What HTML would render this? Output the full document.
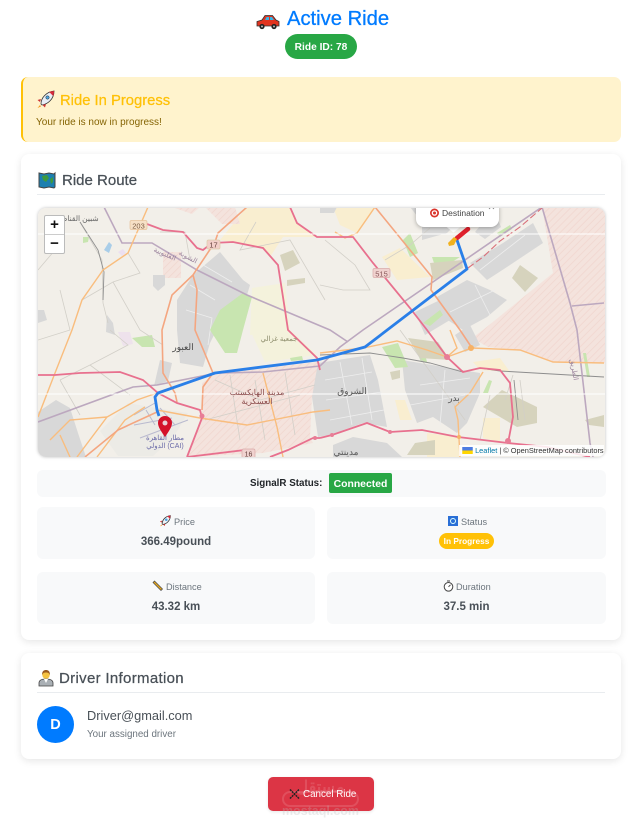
<!DOCTYPE html>
<html><head><meta charset="utf-8"><style>
html,body{margin:0;padding:0;background:#fff;width:642px;height:835px;overflow:hidden}
body{font-family:"Liberation Sans","Noto Sans CJK SC",sans-serif;position:relative}
.a{position:absolute;white-space:nowrap}
.c{text-align:center}
.card{position:absolute;left:21px;width:600px;background:#fff;border-radius:8px;box-shadow:0 2px 8px rgba(0,0,0,.1)}
.box{position:absolute;background:#f8f9fa;border-radius:6px}
.rule{position:absolute;left:37px;width:568px;height:1px;background:#e9ecef}
.h{font-size:15px;color:#495057;-webkit-text-stroke:.25px #495057}
.lbl{font-size:9.200px;color:#6c757d}
.val{font-size:11.500px;font-weight:bold;color:#495057}
svg text{font-family:"Liberation Sans","Noto Sans CJK SC",sans-serif}
</style></head><body>

<svg class="a" style="left:256px;top:14px" width="24" height="16" viewBox="0 0 24 16"><path d="M6 6 9 1.500h7.500L20 6l3 1.500V12H1V7.500z" fill="#e2341f" stroke="#333" stroke-width=".8"/><path d="M9 6l1.500-3h2.500v3zM14 6V3h2l2 3z" fill="#37b6e8"/><circle cx="6" cy="12.500" r="2.600" fill="#222"/><circle cx="18" cy="12.500" r="2.600" fill="#222"/><circle cx="6" cy="12.500" r="1" fill="#bbb"/><circle cx="18" cy="12.500" r="1" fill="#bbb"/></svg>
<div class="a" style="left:287px;top:6px;font-size:20.200px;line-height:26px;color:#007bff;-webkit-text-stroke:.3px #007bff">Active Ride</div>
<div class="a c" style="left:285px;top:34px;width:72px;height:25px;line-height:25px;border-radius:13px;background:#28a745;color:#fff;font-size:10.200px;font-weight:bold"><span style="position:relative;top:1px">Ride ID: 78</span></div>

<div class="a" style="left:21px;top:77px;width:598px;height:65px;background:#fff3cd;border-left:2px solid #ffc107;border-radius:7px"></div>
<svg class="a" style="left:36px;top:90px" width="19" height="19" viewBox="0 0 19 19"><path d="M5 14C5 8 10 2 18 1c0 8-6 13-12 14z" fill="#e8eef5" stroke="#333" stroke-width=".8"/><path d="M13 1.800 18 1c0 2-.3 3.500-.8 5z" fill="#d8283a"/><circle cx="11.500" cy="7.500" r="1.700" fill="#4aa3e0" stroke="#333" stroke-width=".5"/><path d="M5 9 1.500 10 4 12zM10 14l-1 3.500-2.500-2.500z" fill="#c33"/><path d="M4 15l-2.500 3 3.500-1.500z" fill="#f59a23"/></svg>
<div class="a" style="left:60px;top:92px;font-size:14.800px;line-height:18px;color:#ffc107;-webkit-text-stroke:.25px #ffc107">Ride In Progress</div>
<div class="a" style="left:36px;top:116px;font-size:10px;line-height:14px;color:#856404">Your ride is now in progress!</div>

<div class="card" style="top:154px;height:486px"></div>
<svg class="a" style="left:38px;top:171px" width="18" height="18" viewBox="0 0 18 18"><path d="M1 2l5 1 5-1 5 1 1-1v14l-1 1-5-1-5 1-5-1z" fill="#1c7fb0" stroke="#444" stroke-width="1"/><path d="M4 5l5-1 2 3-3 4-3-2zM12 8l3-2v5l-2 2z" fill="#3d9a3f"/></svg>
<div class="a h" style="left:62px;top:172px;line-height:18px">Ride Route</div>
<div class="rule" style="top:194px"></div>

<div class="a" style="left:38px;top:208px;width:567px;height:249px;border-radius:8px;overflow:hidden;box-shadow:0 0 3px rgba(0,0,0,.25)">
<svg width="567" height="249" viewBox="38 208 567 249" style="display:block;filter:blur(.35px)">
<defs>
<pattern id="ht" width="5" height="5" patternUnits="userSpaceOnUse" patternTransform="rotate(45)"><rect width="5" height="5" fill="#f4e3dd"/><rect width="1" height="5" fill="#f1d9d2"/></pattern>
</defs>
<rect x="37" y="207" width="568" height="250" fill="#f2efe9"/>
<g fill="#f9eed0">
<path d="M220 240 247 207H290L297 223 317 237H283L270 257 263 247z"/><path d="M333 207H375L357 233 340 225z"/><path d="M382 257 400 248 430 277 397 280z"/><path d="M427 433 458 437 460 457H427z"/><path d="M483 418H500V442L483 438z"/><path d="M473 362 500 358 510 372 480 370z"/><path d="M395 400 405 400 412 420 400 420z"/>
<path d="M252 288 285 283 290 330 250 335z" fill="#f4f2dc"/><path d="M250 330 290 330 317 355 265 362z" fill="#f4f2dc"/>
</g>
<g>
<path d="M542 207H605V363L553 362 520 350 488 347 472 338 483 330 553 273z" fill="url(#ht)"/>
<path d="M202 383 217 373 317 362 320 380 312 397 310 437 313 443 263 453 187 457 200 420 203 397z" fill="url(#ht)"/>
<path d="M163 252H181V278H163zM172 207H200L192 214zM205 207H222L232 224H222zM220 207H235L240 224 232 224z" fill="url(#ht)"/>
</g>
<path d="M128 403l28 5 32 5-15 25-20 18H118l-18-25z" fill="#ecebe6"/>
<g fill="#d8d8d8">
<path d="M177 300 193 275 220 252 243 280 250 285 247 295 215 333 210 343 203 367 180 363 177 330z"/>
<path d="M318 363 370 355 378 380 387 427 363 423 330 435 318 437 312 397z"/>
<path d="M333 445 353 437 387 443 402 457H333z"/>
<path d="M402 360 480 373 480 393 467 423 457 433 433 417 417 423 405 390z"/>
<path d="M422 240 447 233 467 213 470 207H410L422 222z"/>
<path d="M470 263 503 243 533 223 543 243 507 267 487 280z"/>
<path d="M437 297 467 280 490 290 507 300 487 317 463 330 443 317z"/>
<path d="M415 312 440 300 450 320 425 335zM455 335 470 325 480 345 465 352z"/>
<path d="M320 207h17l-3 6h-14z"/>
<path d="M160 360l12 3-4 18-14 5z"/>
<path d="M38 412l18-12 14 8 8 25 8 24H38z"/>
<path d="M38 310h6l3 10-9 3zM107 315l6 8 2 12-9-3zM153 275h12v10l-7 6-5-5z"/>
<path d="M475 232l10-12 12-3 4 10-16 12z"/>
</g>
<g fill="none" stroke="#eeeeee" stroke-width=".8">
<path d="M190 285 215 300M186 310 212 318 208 345M198 262 232 282M325 380 372 372M326 400 382 392M330 420 384 410M340 362 352 425M362 358 372 420M420 385 470 378M410 405 465 395M445 370 440 425M480 270 525 235M450 312 495 290M475 285 490 315"/>
</g>
<g fill="#c8e5b0">
<path d="M210 330 220 310 243 293 252 297 243 330 237 353 225 353z"/>
<path d="M132 338 152 335 155 347 142 347z"/>
<path d="M403 240l7-7 8 20-8 4z"/><path d="M432 257h28l-8 5-18 1z"/>
<path d="M382 347 398 343 408 367 395 368zM417 352 424 350 427 362 421 362z"/>
<path d="M483 393 489 380 492 381 488 393zM583 353 586 353 590 377 587 377z"/>
<path d="M497 233 510 225 512 229 500 237zM423 323 440 310 443 315 430 326z"/>
<path d="M290 358 302 356 303 360 291 361z"/>
<path d="M83 237l6 0-1 5-5 1z"/>
</g>
<g fill="#d6d3bd">
<path d="M430 263 462 260 463 268 433 280zM520 265 538 278 525 292 512 278z"/>
<path d="M280 255 293 250 300 263 285 271zM287 280 305 278 305 283 287 286z"/>
<path d="M483 407 502 390 537 407 537 423 517 427z"/><path d="M585 420l19-5v12l-15-2zM390 372l10-2 0 8-8 2zM415 443l20-3v15h-28z"/>
<path d="M408 338l30 4 12 18-30-2z"/>
</g>
<path d="M104 250l5-8 3 3-3 8z" fill="#a9cde8"/>
<path d="M118 252l5-3 3 4-4 3z" fill="#ecdff0"/>
<path d="M118 332h12l3 12-10 2z" fill="#eee2ec"/>

<g fill="none" stroke="#d2cfc8" stroke-width=".8">
<path d="M80 222 102 260 103 303 108 323M128 253 140 273 113 282 82 300M113 282 140 330 163 345M38 270 55 250 63 225M60 290 70 330 38 340M160 232H185L190 260M256 222 240 250 290 240 325 300M325 240 355 265 370 290 343 290 320 285M110 330 128 345 90 365 60 380M60 380 80 415M90 365 130 395M215 380 260 400 315 385M205 420 300 395M230 375 240 440M255 380 265 440M285 372 295 435M400 330 465 420M505 400 513 375M520 380 525 420M480 440 490 395M385 260 410 245 430 228"/>
</g>
<g fill="none" stroke="#b9bacf" stroke-width="1">
<path d="M134 415 155 403M134 425 172 418M140 438 188 420M146 410 155 425M160 408 175 425"/>
</g>
<g fill="none" stroke="#8d8d8d" stroke-width=".9">
<path d="M80 222 98 250 104 272 103 300M320 355 370 353 403 358 430 363 463 372 480 368 500 371 604 377M514 380 518 420"/>
</g>
<g fill="none" stroke="#bca8bf" stroke-width="1.600">
<path d="M104 207 122 243H152L197 270 247 295 330 330 348 342"/>
<path d="M542 207 363 330 340 347 320 366 263 372 217 373 157 385 133 387 38 422"/>
<path d="M542 207 570 303 577 330 590 443 593 457M572 306 604 303"/>
</g>
<g fill="none" stroke="#f9bd7e" stroke-width="1.400">
<path d="M148 207 128 253 103 270 82 300 72 330 55 373 38 417"/>
<path d="M320 353 363 348 397 341 427 350 447 357 472 348 520 350 553 362 604 363"/>
<path d="M483 372 470 393 455 407 458 420 460 457"/>
<path d="M157 410 200 418 247 425 313 412 330 410"/>
<path d="M263 373 277 427 283 457"/>
<path d="M77 457 107 417 137 400 157 393M97 457 125 420 145 407M50 440 70 420 107 417M70 457 60 435"/>
<path d="M450 330 457 348 447 357M375 207 357 233 345 238 335 232"/>
</g>
<g fill="none" stroke="#f4a680" stroke-width="1.600">
<path d="M247 207 218 233 215 242 193 275 172 295 162 330 163 373 175 393 177 402"/>
<path d="M193 275 197 290 195 330 213 373 203 387 202 410"/>
<path d="M375 207 432 277 431 290 460 330 472 348"/>
<path d="M85 457 118 430 157 412"/>
</g>
<g fill="none" stroke="#e8708e" stroke-width="1.800">
<path d="M147 224 163 230 183 232 197 248 203 250 212 243 233 242 263 248 278 265 285 310 288 330 317 358 320 370"/>
<path d="M290 207 297 223 317 237 353 237 373 263 410 308 427 330 447 357 463 372 480 368 500 370 510 383 513 417 508 443"/>
<path d="M38 375 55 375 80 373 120 372 143 380 158 393 177 403 200 410 202 418 187 457"/>
<path d="M320 438 332 435 367 423 390 432 422 430 458 437 508 443 547 447 590 457"/>
<path d="M320 438 313 438 288 450 270 457M187 457 245 450 250 457"/>
<path d="M468 268 483 257 500 241 520 227 542 208" stroke="#d9707a" stroke-width="1.100" stroke-dasharray="7 3"/>
</g>
<g fill="#e87d96"><circle cx="332" cy="435" r="2"/><circle cx="390" cy="432" r="2"/><circle cx="508" cy="441" r="3"/><circle cx="447" cy="357" r="3"/><circle cx="202" cy="416" r="2.500"/><circle cx="315" cy="438" r="2"/></g>
<circle cx="471" cy="348" r="3" fill="#f6b266"/><circle cx="459" cy="437" r="2" fill="#f6b266"/>
<path d="M37 234H605M37 394H605" stroke="#fff" stroke-width="1"/>

<g font-size="9" text-anchor="middle">
<rect x="130" y="220.500" width="17" height="9" rx="1.500" fill="#f6e0c6" stroke="#e6c29b" stroke-width=".7"/><text x="138.500" y="228.300" font-size="7.500" fill="#7c5c43">203</text>
<rect x="207" y="240" width="13" height="9" rx="1.500" fill="#f3cfc9" stroke="#dca" stroke-width=".7"/><text x="213.500" y="247.700" font-size="7.500" fill="#63403c">17</text>
<rect x="373" y="268.500" width="17" height="9" rx="1.500" fill="#f0d2cf" stroke="#d9aaa9" stroke-width=".7"/><text x="381.500" y="276.300" font-size="7.500" fill="#8a5a5c">515</text>
<rect x="242" y="449" width="13" height="9" rx="1.500" fill="#f0d2cf" stroke="#d9aaa9" stroke-width=".7"/><text x="248.500" y="456.500" font-size="7" fill="#63403c">16</text>
<text x="183" y="350" fill="#444">العبور</text>
<text x="352" y="394" fill="#555">الشروق</text>
<text x="454" y="401" fill="#555">بدر</text>
<text x="346" y="455" fill="#555">مدينتي</text>
<text x="257" y="395" font-size="8" fill="#8a4a4a">مدينة الهايكستب</text>
<text x="257" y="404" font-size="8" fill="#8a4a4a">العسكرية</text>
<text x="165" y="440" font-size="7" fill="#6a6aa8">مطار القاهرة</text>
<text x="165" y="448" font-size="7" fill="#6a6aa8">الدولي (CAI)</text>
<text x="78" y="221" font-size="7.500" fill="#666">شبين القناطر</text>
<text x="279" y="341" font-size="7" fill="#8b8b6a">جمعية غزالي</text>
<text transform="translate(164 256) rotate(24)" font-size="7" fill="#9a829c">القليوبية</text>
<text transform="translate(187 259) rotate(28)" font-size="7" fill="#9a829c">الشوبة</text>
<text transform="translate(572 370) rotate(80)" font-size="7" fill="#9a829c">الطريق</text>
</g>

<path d="M159 416 157 410 155 397 158 393 215 373 317 360 365 347 467 269 457 240" fill="none" stroke="#2a7fe8" stroke-width="2.800" stroke-linejoin="round"/>

<path d="M165 437C161 431 158 427 158 423a7 7 0 0 1 14 0C172 427 169 431 165 437z" fill="#d4112a"/>
<circle cx="165" cy="423" r="2.500" fill="#e8d0d6"/>

<path d="M457 238 468 229" stroke="#e0202c" stroke-width="4.500" stroke-linecap="round"/>
<path d="M448 243l6-6 3 2-3 6-5 1z" fill="#f2b21f"/>

<path d="M446 226.500h15l-7.500 6z" fill="#fff"/>
<rect x="416" y="200" width="83" height="27" rx="8" fill="#fff" style="filter:drop-shadow(0 1px 2px rgba(0,0,0,.3))"/>
<circle cx="434.500" cy="213" r="4.500" fill="#d9342b"/><circle cx="434.500" cy="213" r="2.800" fill="#fff"/><circle cx="434.500" cy="213" r="1.500" fill="#d9342b"/>
<text x="442" y="216" font-size="8.500" fill="#444">Destination</text>
<path d="M489 209 491.500 206.500 494 209" fill="none" stroke="#777" stroke-width=".8"/>
</svg>
<div class="a" style="left:6px;top:7px;width:19px;height:37px;background:#fff;border:1px solid #bbb;border-radius:2px">
<div style="height:18px;border-bottom:1px solid #ccc;text-align:center;font:bold 15px/18px 'Liberation Sans',sans-serif;color:#111">+</div>
<div style="text-align:center;font:bold 15px/17px 'Liberation Sans',sans-serif;color:#111">−</div></div>
<div class="a" style="right:1px;bottom:1px;height:11px;line-height:11px;width:145px;background:rgba(255,255,255,.85);font-size:7.400px;color:#333;padding-left:3px;box-sizing:border-box"><svg width="11" height="7" viewBox="0 0 12 8" style="vertical-align:-0.500px"><rect width="12" height="4" fill="#4C7BE1"/><rect y="4" width="12" height="4" fill="#FFD500"/></svg> <span style="color:#0078a8">Leaflet</span> | © OpenStreetMap contributors</div>
</div>

<div class="box" style="left:37px;top:470px;width:569px;height:27px"></div>
<div class="a" style="left:250px;top:477px;font-size:9.800px;line-height:13px;font-weight:bold;color:#212529">SignalR Status:</div>
<div class="a c" style="left:329px;top:473px;width:63px;height:20px;line-height:21px;background:#28a745;border-radius:2px;color:#fff;font-size:10.400px;font-weight:bold"><span style="position:relative;top:1px">Connected</span></div>

<div class="box" style="left:37px;top:507px;width:278px;height:52px"></div>
<div class="box" style="left:327px;top:507px;width:279px;height:52px"></div>
<div class="box" style="left:37px;top:572px;width:278px;height:52px"></div>
<div class="box" style="left:327px;top:572px;width:279px;height:52px"></div>

<svg class="a" style="left:159px;top:515px" width="12" height="12" viewBox="0 0 19 19"><path d="M5 14C5 8 10 2 18 1c0 8-6 13-12 14z" fill="#eef2f6" stroke="#333" stroke-width="1.200"/><path d="M13 1.800 18 1c0 2-.3 3.500-.8 5z" fill="#d8283a"/><circle cx="11.500" cy="7.500" r="2" fill="#4aa3e0"/><path d="M5 9 1.500 10 4 12zM10 14l-1 3.500-2.500-2.500z" fill="#c33"/><path d="M4 15l-2.500 3 3.500-1.500z" fill="#f59a23"/></svg>
<div class="a lbl" style="left:174px;top:515px;line-height:14px">Price</div>
<div class="a c val" style="left:37px;top:535px;width:278px;line-height:14px">366.49pound</div>

<svg class="a" style="left:448px;top:516px" width="10" height="10" viewBox="0 0 10 10"><rect width="10" height="10" fill="#2a6fd6"/><circle cx="5" cy="5" r="2.500" fill="none" stroke="#dff" stroke-width="1"/></svg>
<div class="a lbl" style="left:461px;top:515px;line-height:14px">Status</div>
<div class="a c" style="left:439px;top:533px;width:55px;height:16px;line-height:16px;border-radius:8px;background:#ffc107;color:#fff;font-size:8.300px;font-weight:bold">In Progress</div>

<svg class="a" style="left:152px;top:580px" width="11" height="11" viewBox="0 0 11 11"><path d="M1 2.500 2.500 1 10.500 9 9 10.500z" fill="#e2a520" stroke="#444" stroke-width=".7"/></svg>
<div class="a lbl" style="left:166px;top:580px;line-height:14px">Distance</div>
<div class="a c val" style="left:37px;top:600px;width:278px;line-height:14px">43.32 km</div>

<svg class="a" style="left:443px;top:580px" width="11" height="12" viewBox="0 0 11 12"><circle cx="5.500" cy="6.800" r="4.300" fill="#fff" stroke="#444" stroke-width="1"/><path d="M4 1h3M5.500 6.800 7.500 4.800" stroke="#444" stroke-width="1" fill="none"/></svg>
<div class="a lbl" style="left:456px;top:580px;line-height:14px">Duration</div>
<div class="a c val" style="left:327px;top:600px;width:279px;line-height:14px">37.5 min</div>

<div class="card" style="top:653px;height:106px"></div>
<svg class="a" style="left:38px;top:669px" width="16" height="18" viewBox="0 0 16 18"><path d="M1 17v-3c0-3 3-4 7-4s7 1 7 4v3z" fill="#aab0b5" stroke="#444" stroke-width=".8"/><path d="M6 10l2 4 2-4z" fill="#fff"/><circle cx="8" cy="6" r="3.700" fill="#f5c242"/><path d="M4 6c0-4 2-5 4-5s4 1 4 5c-1-2-2-2.500-4-2.500S5 4 4 6z" fill="#9a5a1f"/></svg>
<div class="a h" style="left:59px;top:670px;line-height:18px;letter-spacing:.32px">Driver Information</div>
<div class="rule" style="top:692px"></div>
<div class="a c" style="left:37px;top:706px;width:37px;height:37px;line-height:38px;border-radius:50%;background:#007bff;color:#fff;font-size:14.500px;font-weight:bold">D</div>
<div class="a" style="left:87px;top:708px;font-size:12.800px;line-height:16px;color:#495057">Driver@gmail.com</div>
<div class="a" style="left:87px;top:728px;font-size:9.800px;line-height:13px;color:#6c757d">Your assigned driver</div>

<div class="a" style="left:268px;top:777px;width:106px;height:34px;background:#dc3545;border-radius:5px;box-shadow:0 1px 3px rgba(0,0,0,.1)"></div>
<div class="a" style="left:282px;top:791px;width:77px;height:16px;border:2px solid rgba(255,255,255,.13);border-radius:9px;box-sizing:border-box"></div>
<div class="a c" style="left:282px;top:777px;width:77px;font-size:16px;line-height:22px;font-weight:bold;color:rgba(255,255,255,.13)">مستقل</div>
<svg class="a" style="left:289px;top:788px" width="11" height="12" viewBox="0 0 11 12"><path d="M1 1.500 10 10.500M10 1.500 1 10.500" stroke="#222" stroke-width="1.500" stroke-dasharray="2 .7"/></svg>
<div class="a" style="left:303px;top:788px;font-size:9.800px;line-height:13px;color:#fff">Cancel Ride</div>
<div class="a c" style="left:272px;top:804px;width:97px;font-size:12.500px;line-height:15px;font-weight:bold;color:rgba(190,190,190,.28)">mostaql.com</div>
</body></html>
